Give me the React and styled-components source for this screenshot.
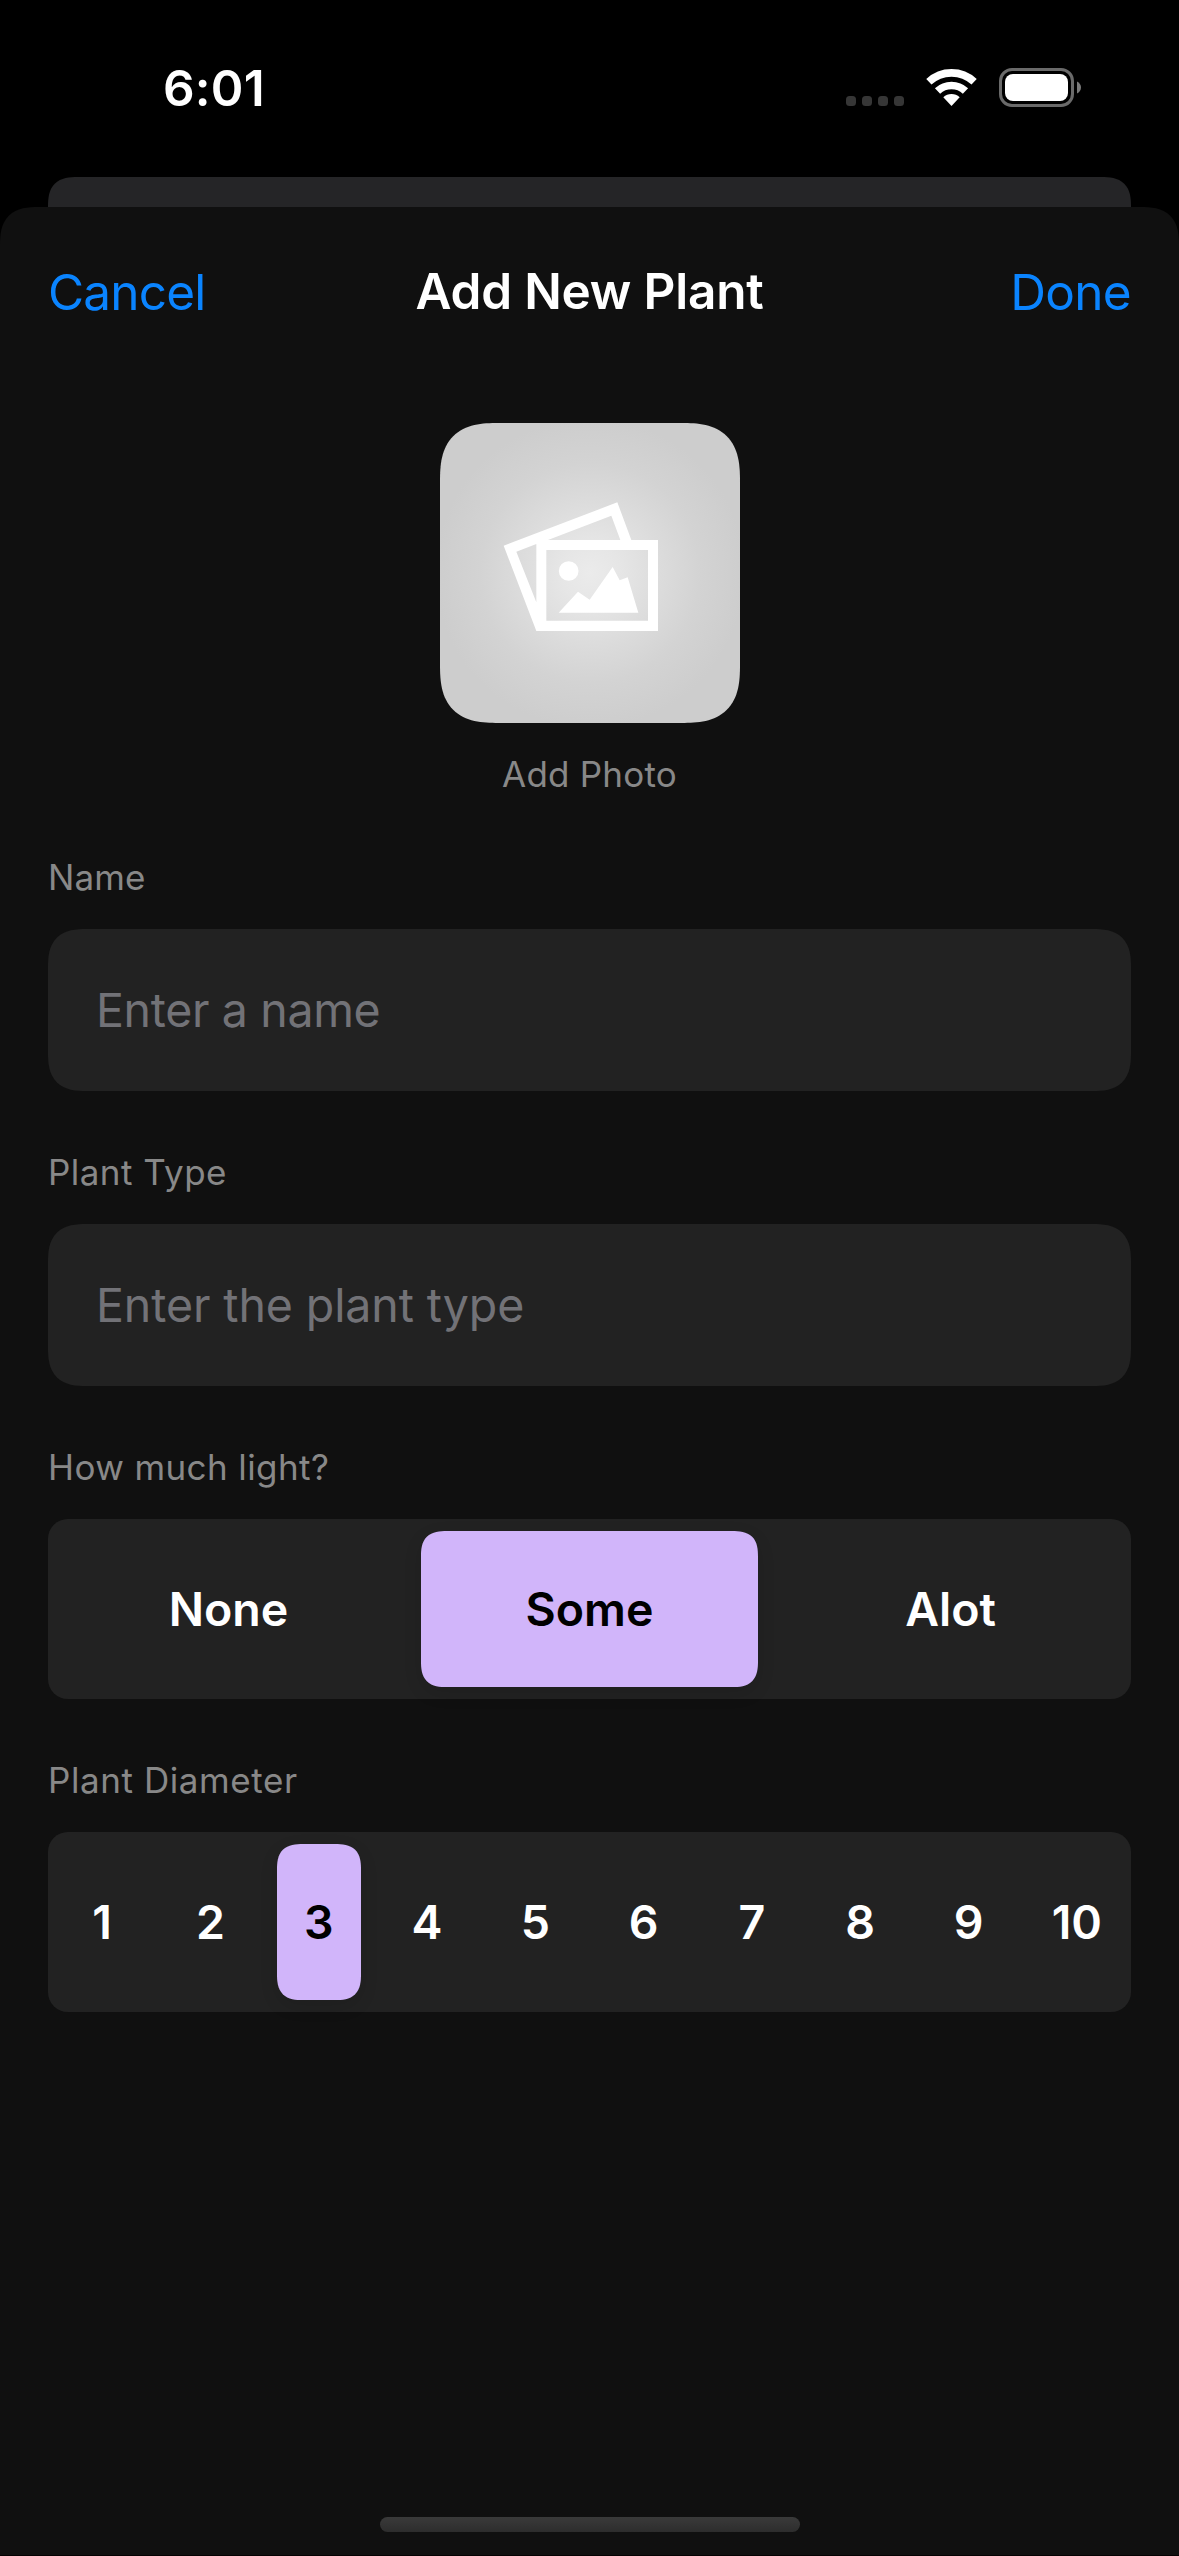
import React, { useState } from 'react';
import styled, { createGlobalStyle, css } from 'styled-components';

const color = {
  sheet: '#101010',
  backSheet: '#252527',
  field: '#222222',
  label: '#888888',
  placeholder: '#727277',
  link: '#0a84ff',
  accent: '#d1b5fa',
};

/* Continuous corners: a wider radius with a flatter curve than a circle. */
const continuous = (r) => css`
  border-radius: ${r}px;
  @supports (corner-shape: superellipse(1.44)) {
    border-radius: ${r * 1.3}px;
    corner-shape: superellipse(1.44);
  }
`;

const continuousTop = (r) => css`
  border-radius: ${r}px ${r}px 0 0;
  @supports (corner-shape: superellipse(1.44)) {
    border-radius: ${r * 1.3}px ${r * 1.3}px 0 0;
    corner-shape: superellipse(1.44);
  }
`;

const GlobalStyle = createGlobalStyle`
  * { box-sizing: border-box; }
  body {
    margin: 0;
    background: #000;
    color: #fff;
    font-family: Inter, Roboto, "Liberation Sans", sans-serif;
    -webkit-font-smoothing: antialiased;
  }
  button {
    appearance: none;
    margin: 0;
    padding: 0;
    border: 0;
    background: none;
    color: inherit;
    font: inherit;
  }
`;

const Screen = styled.div`
  width: 1179px;
  height: 2556px;
  display: flex;
  flex-direction: column;
  overflow: hidden;
  background: #000;
`;

const StatusBar = styled.header`
  height: 177px;
  flex: none;
  display: flex;
  justify-content: space-between;
  align-items: flex-start;
  padding: 58px 98px 0 163px;
`;

const Clock = styled.time`
  font-size: 49.5px;
  font-weight: 600;
  line-height: 60px;
  letter-spacing: 0.2px;
`;

const StatusIcons = styled.div`
  display: flex;
  align-items: flex-end;
  gap: 22px;
  padding-top: 10px;

  svg {
    display: block;
    overflow: visible;
  }
`;

const SignalDots = styled.div`
  display: flex;
  gap: 6px;
  padding-bottom: 1px;
`;

const Dot = styled.span`
  width: 10px;
  height: 10px;
  border-radius: 3.5px;
  background: #363636;
`;

const BackSheet = styled.div`
  height: 30px;
  flex: none;
  margin: 0 48px;
  background: ${color.backSheet};
  ${continuousTop(30)}
`;

const Sheet = styled.main`
  flex: 1;
  display: flex;
  flex-direction: column;
  background: ${color.sheet};
  border-bottom: 1px solid #050203;
  ${continuousTop(30)}
`;

const NavBar = styled.nav`
  height: 170px;
  flex: none;
  display: grid;
  grid-template-columns: 1fr auto 1fr;
  align-items: center;
  padding: 0 48px;
  font-size: 49.5px;
  line-height: 60px;
`;

const NavAction = styled.button`
  justify-self: ${(p) => (p.$side === 'end' ? 'end' : 'start')};
  color: ${color.link};
  letter-spacing: ${(p) => (p.$side === 'end' ? -0.7 : -0.8)}px;
`;

const NavTitle = styled.h1`
  margin: 0;
  padding-bottom: 2px;
  font-size: inherit;
  font-weight: 600;
  letter-spacing: -0.2px;
`;

const Form = styled.div`
  flex: 1;
  display: flex;
  flex-direction: column;
  gap: 60px;
  padding: 46px 48px 0;
`;

const PhotoPicker = styled.div`
  display: flex;
  flex-direction: column;
  align-items: center;
  gap: 30px;
  padding-bottom: 1px;
`;

const PhotoTile = styled.button`
  width: 300px;
  height: 300px;
  display: block;
  overflow: hidden;
  background: radial-gradient(circle at center, #ebebeb 0, #e6e6e6 30px, #dcdcdc 70px, #d3d3d3 110px, #cdcdcd 155px);
  ${continuous(45)}

  svg {
    display: block;
  }
`;

const Section = styled.section`
  display: flex;
  flex-direction: column;
  gap: 31px;
`;

const Label = styled.span`
  color: ${color.label};
  font-size: 35px;
  line-height: 42px;
  letter-spacing: ${(p) => p.$tracking ?? 0.5}px;
`;

const Field = styled.div`
  height: 162px;
  display: flex;
  align-items: center;
  padding: 0 48px;
  background: ${color.field};
  color: ${color.placeholder};
  font-size: 46.5px;
  line-height: 56px;
  letter-spacing: ${(p) => p.$tracking}px;
  ${continuous(30)}
`;

const Segments = styled.div`
  height: 180px;
  display: grid;
  grid-auto-flow: column;
  grid-auto-columns: minmax(0, 1fr);
  background: ${color.field};
  border-radius: 20px;
`;

const Segment = styled.button`
  margin: 12px;
  display: flex;
  align-items: center;
  justify-content: center;
  font-size: 46.5px;
  font-weight: 600;
  line-height: 56px;
  white-space: nowrap;
  ${continuous(20)}
  ${(p) =>
    p.$selected &&
    css`
      background: ${color.accent};
      color: #000;
      box-shadow: 0 6px 18px rgba(0, 0, 0, 0.12);
    `}
`;

const HomeArea = styled.footer`
  flex: none;
  display: flex;
  justify-content: center;
  padding-bottom: 23px;
`;

const HomeIndicator = styled.span`
  width: 420px;
  height: 15px;
  border-radius: 8px;
  background: linear-gradient(#3a3a3a, #2d2d2d);
`;

function WifiIcon() {
  return (
    <svg width="51" height="39" viewBox="-76.5 -114 153 117" fill="none" aria-hidden="true">
      <path d="M-67.9-72.8A99.5 99.5 0 0 1 67.9-72.8" stroke="#fff" strokeWidth="23" />
      <path d="M-41.9-45A61.5 61.5 0 0 1 41.9-45" stroke="#fff" strokeWidth="23" />
      <path d="M0 0L-24.5-26.3A36 36 0 0 1 24.5-26.3Z" fill="#fff" />
    </svg>
  );
}

function BatteryIcon() {
  return (
    <svg width="82" height="39" viewBox="0 0 82 39" fill="none" aria-hidden="true">
      <rect x="1.5" y="1.5" width="72" height="36" rx="11.5" stroke="#6a6a6a" strokeWidth="3" />
      <rect x="6" y="6" width="63" height="27" rx="8" fill="#fff" />
      <path d="M78 13.6C80.4 14.6 82 17 82 19.6S80.4 24.6 78 25.6Z" fill="#7a7a7a" />
    </svg>
  );
}

function PhotosIcon() {
  return (
    <svg width="300" height="300" viewBox="60 69 900 900" fill="#fff" aria-hidden="true">
      <path
        fillRule="evenodd"
        d="M251 437L592 307L634 420H714V693H349ZM289 455L349 607V432ZM384 420H601L574 347ZM379 450V662H684V450Z"
      />
      <circle cx="446" cy="513" r="29.5" />
      <path d="M416 638L474 575L509 599L578 501L599 541L623 532L655 638Z" />
    </svg>
  );
}

function SegmentedControl({ options, initial }) {
  const [selected, setSelected] = useState(initial);
  return (
    <Segments>
      {options.map((option) => (
        <Segment key={option} $selected={option === selected} onClick={() => setSelected(option)}>
          {option}
        </Segment>
      ))}
    </Segments>
  );
}

export default function App() {
  return (
    <>
      <GlobalStyle />
      <Screen>
        <StatusBar>
          <Clock>6:01</Clock>
          <StatusIcons>
            <SignalDots>
              <Dot />
              <Dot />
              <Dot />
              <Dot />
            </SignalDots>
            <WifiIcon />
            <BatteryIcon />
          </StatusIcons>
        </StatusBar>
        <BackSheet />
        <Sheet>
          <NavBar>
            <NavAction $side="start">Cancel</NavAction>
            <NavTitle>Add New Plant</NavTitle>
            <NavAction $side="end">Done</NavAction>
          </NavBar>
          <Form>
            <PhotoPicker>
              <PhotoTile aria-label="Add Photo">
                <PhotosIcon />
              </PhotoTile>
              <Label $tracking={0.2}>Add Photo</Label>
            </PhotoPicker>
            <Section>
              <Label $tracking={0.1}>Name</Label>
              <Field $tracking={-0.35}>Enter a name</Field>
            </Section>
            <Section>
              <Label $tracking={0.45}>Plant Type</Label>
              <Field $tracking={-0.1}>Enter the plant type</Field>
            </Section>
            <Section>
              <Label $tracking={0.4}>How much light?</Label>
              <SegmentedControl options={['None', 'Some', 'Alot']} initial="Some" />
            </Section>
            <Section>
              <Label $tracking={0.58}>Plant Diameter</Label>
              <SegmentedControl
                options={['1', '2', '3', '4', '5', '6', '7', '8', '9', '10']}
                initial="3"
              />
            </Section>
          </Form>
          <HomeArea>
            <HomeIndicator />
          </HomeArea>
        </Sheet>
      </Screen>
    </>
  );
}
